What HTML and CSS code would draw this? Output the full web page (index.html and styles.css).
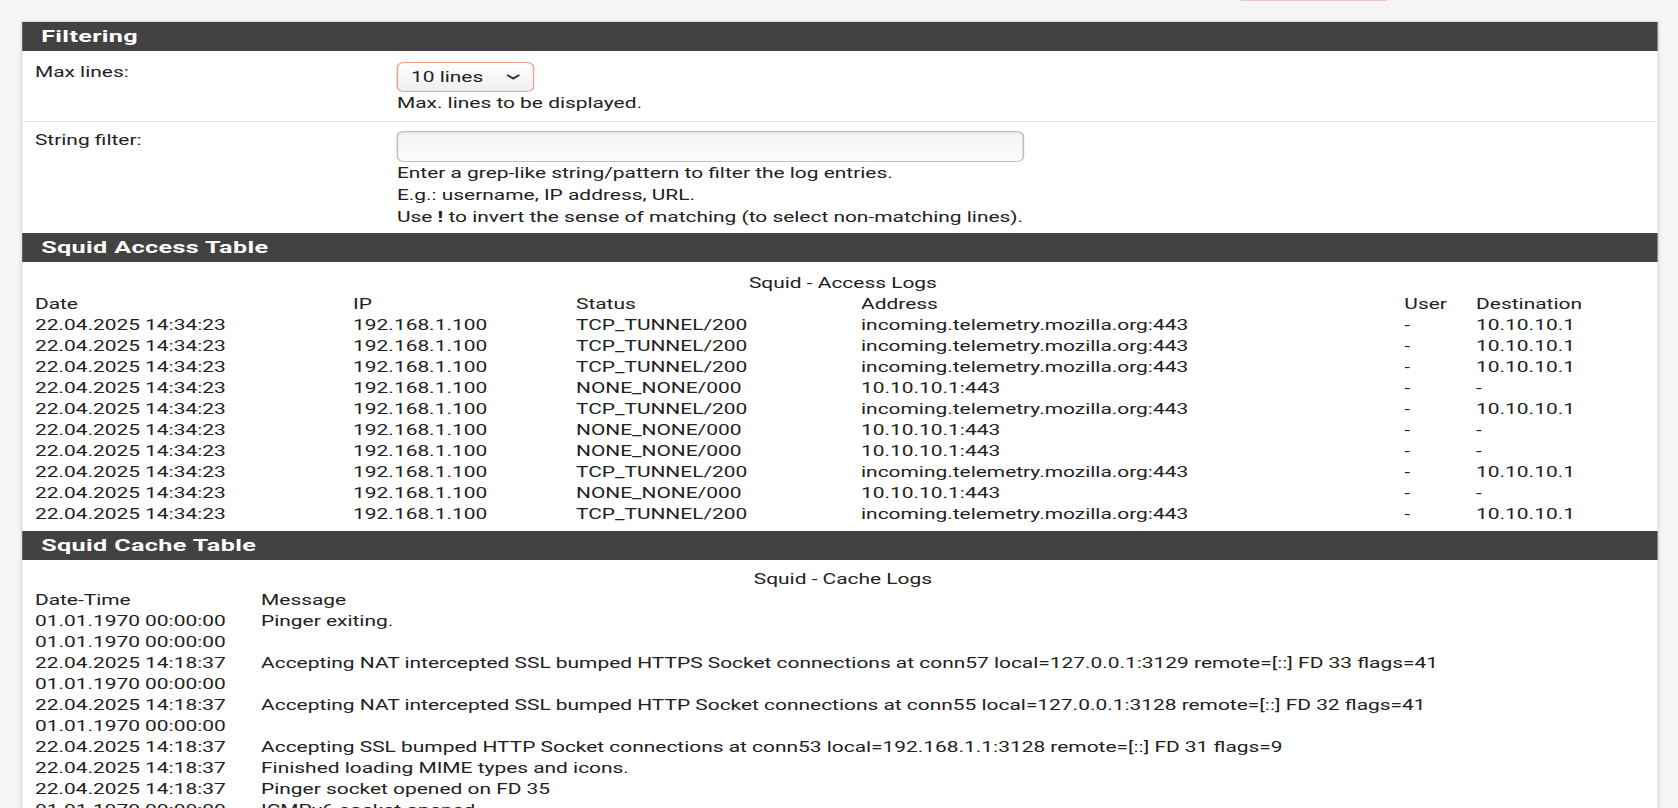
FILE: index.html
```html
<!DOCTYPE html>
<html lang="en">
<head>
<meta charset="utf-8">
<title>Squid Proxy Server: Real Time</title>
<link rel="stylesheet" href="styles.css">
</head>
<body>
<div class="stage">
  <div class="top-strip"><span class="btn-edge"></span></div>
  <div class="panel">
    <h2 class="panel-heading">Filtering</h2>
    <div class="form-row">
      <label class="form-label" for="maxlines">Max lines:</label>
      <div class="form-control-col">
        <div class="select-wrap">
          <select id="maxlines" class="select">
            <option>10 lines</option>
            <option>15 lines</option>
            <option>20 lines</option>
            <option>25 lines</option>
            <option>100 lines</option>
          </select>
          <svg class="chevron" viewBox="0 0 10 6" aria-hidden="true"><path d="M1.2 1.2 L5 4.8 L8.8 1.2"/></svg>
        </div>
        <div class="help">Max. lines to be displayed.</div>
      </div>
    </div>
    <div class="form-row">
      <label class="form-label" for="strfilter">String filter:</label>
      <div class="form-control-col">
        <input id="strfilter" class="text-input" type="text">
        <div class="help">Enter a grep-like string/pattern to filter the log entries.<br>E.g.: username, IP address, URL.<br>Use <b>!</b> to invert the sense of matching (to select non-matching lines).</div>
      </div>
    </div>

    <h2 class="panel-heading">Squid Access Table</h2>
    <div class="panel-body access-body">
      <table class="log-table">
        <caption>Squid - Access Logs</caption>
        <colgroup>
          <col class="c-date"><col class="c-ip"><col class="c-status"><col class="c-addr"><col class="c-user"><col>
        </colgroup>
        <thead>
          <tr><th>Date</th><th>IP</th><th>Status</th><th>Address</th><th>User</th><th>Destination</th></tr>
        </thead>
        <tbody>
          <tr><td>22.04.2025 14:34:23</td><td>192.168.1.100</td><td>TCP_TUNNEL/200</td><td>incoming.telemetry.mozilla.org:443</td><td>-</td><td>10.10.10.1</td></tr>
          <tr><td>22.04.2025 14:34:23</td><td>192.168.1.100</td><td>TCP_TUNNEL/200</td><td>incoming.telemetry.mozilla.org:443</td><td>-</td><td>10.10.10.1</td></tr>
          <tr><td>22.04.2025 14:34:23</td><td>192.168.1.100</td><td>TCP_TUNNEL/200</td><td>incoming.telemetry.mozilla.org:443</td><td>-</td><td>10.10.10.1</td></tr>
          <tr><td>22.04.2025 14:34:23</td><td>192.168.1.100</td><td>NONE_NONE/000</td><td>10.10.10.1:443</td><td>-</td><td>-</td></tr>
          <tr><td>22.04.2025 14:34:23</td><td>192.168.1.100</td><td>TCP_TUNNEL/200</td><td>incoming.telemetry.mozilla.org:443</td><td>-</td><td>10.10.10.1</td></tr>
          <tr><td>22.04.2025 14:34:23</td><td>192.168.1.100</td><td>NONE_NONE/000</td><td>10.10.10.1:443</td><td>-</td><td>-</td></tr>
          <tr><td>22.04.2025 14:34:23</td><td>192.168.1.100</td><td>NONE_NONE/000</td><td>10.10.10.1:443</td><td>-</td><td>-</td></tr>
          <tr><td>22.04.2025 14:34:23</td><td>192.168.1.100</td><td>TCP_TUNNEL/200</td><td>incoming.telemetry.mozilla.org:443</td><td>-</td><td>10.10.10.1</td></tr>
          <tr><td>22.04.2025 14:34:23</td><td>192.168.1.100</td><td>NONE_NONE/000</td><td>10.10.10.1:443</td><td>-</td><td>-</td></tr>
          <tr><td>22.04.2025 14:34:23</td><td>192.168.1.100</td><td>TCP_TUNNEL/200</td><td>incoming.telemetry.mozilla.org:443</td><td>-</td><td>10.10.10.1</td></tr>
        </tbody>
      </table>
    </div>

    <h2 class="panel-heading">Squid Cache Table</h2>
    <div class="panel-body cache-body">
      <table class="log-table">
        <caption>Squid - Cache Logs</caption>
        <colgroup>
          <col class="c-datetime"><col>
        </colgroup>
        <thead>
          <tr><th>Date-Time</th><th>Message</th></tr>
        </thead>
        <tbody>
          <tr><td>01.01.1970 00:00:00</td><td>Pinger exiting.</td></tr>
          <tr><td>01.01.1970 00:00:00</td><td></td></tr>
          <tr><td>22.04.2025 14:18:37</td><td>Accepting NAT intercepted SSL bumped HTTPS Socket connections at conn57 local=127.0.0.1:3129 remote=[::] FD 33 flags=41</td></tr>
          <tr><td>01.01.1970 00:00:00</td><td></td></tr>
          <tr><td>22.04.2025 14:18:37</td><td>Accepting NAT intercepted SSL bumped HTTP Socket connections at conn55 local=127.0.0.1:3128 remote=[::] FD 32 flags=41</td></tr>
          <tr><td>01.01.1970 00:00:00</td><td></td></tr>
          <tr><td>22.04.2025 14:18:37</td><td>Accepting SSL bumped HTTP Socket connections at conn53 local=192.168.1.1:3128 remote=[::] FD 31 flags=9</td></tr>
          <tr><td>22.04.2025 14:18:37</td><td>Finished loading MIME types and icons.</td></tr>
          <tr><td>22.04.2025 14:18:37</td><td>Pinger socket opened on FD 35</td></tr>
          <tr><td>01.01.1970 00:00:00</td><td>ICMPv6 socket opened.</td></tr>
          <tr><td>01.01.1970 00:00:00</td><td>ICMP socket opened.</td></tr>
        </tbody>
      </table>
    </div>
  </div>
</div>
</body>
</html>
```
FILE: styles.css
```css
html, body {
  margin: 0;
  padding: 0;
  height: 100%;
  overflow: hidden;
}

body {
  background: #f5f5f5;
  font-family: Roboto, "Liberation Sans", sans-serif;
  font-size: 14.14px;
  color: #212121;
}

/* the captured page is rendered wide: everything is stretched horizontally */
.stage {
  width: 1134px;
  transform: scaleX(1.48);
  transform-origin: 0 0;
}

.top-strip {
  height: 21px;
  display: flex;
  align-items: flex-start;
}

.btn-edge {
  display: block;
  margin-left: 838px;
  width: 98.5px;
  height: 1px;
  background: #efc4c4;
}

.panel {
  margin: 0 13.5px;
  background: #fff;
  border: 1px solid #dcdcdc;
  box-shadow: 0 1px 3px rgba(0, 0, 0, 0.12);
}

.panel-heading {
  margin: 0;
  height: 29px;
  padding-left: 13.3px;
  background: #424242;
  color: #fff;
  font-size: 17px;
  font-weight: 700;
  letter-spacing: 0.25px;
  line-height: 29px;
}

.form-row {
  display: flex;
  padding: 11px 0 7px;
  border-bottom: 1px solid #e3e3e3;
}

.form-row + .form-row {
  padding: 9px 0 5px;
  border-bottom: 0;
}

.form-label {
  box-sizing: border-box;
  width: 253.7px;
  padding-left: 9.1px;
  line-height: 20px;
  flex: none;
}

.form-row + .form-row .form-label {
  margin-top: -1px;
}

.form-control-col {
  display: flex;
  flex-direction: column;
  align-items: flex-start;
}

.select-wrap {
  position: relative;
  width: 92.6px;
  height: 30px;
}

.select {
  -webkit-appearance: none;
  appearance: none;
  box-sizing: border-box;
  width: 100%;
  height: 30px;
  margin: 0;
  padding: 0 20px 0 8.5px;
  border: 1px solid #e5a58d;
  border-radius: 5px;
  background: linear-gradient(#ffffff, #efefef);
  font-family: Roboto, "Liberation Sans", sans-serif;
  font-size: 14.14px;
  color: #212121;
  outline: none;
}

.chevron {
  position: absolute;
  right: 9px;
  top: 12px;
  width: 9.5px;
  height: 6px;
  fill: none;
  stroke: #333;
  stroke-width: 1.7;
  stroke-linecap: round;
  stroke-linejoin: round;
  pointer-events: none;
}

.text-input {
  box-sizing: border-box;
  width: 423.7px;
  height: 31px;
  margin: 0;
  padding: 0 8px;
  border: 1px solid #bdbdbd;
  border-radius: 5px;
  background: linear-gradient(#f4f4f4, #fcfcfc);
  box-shadow: inset 0 1px 1px rgba(0, 0, 0, 0.08);
  font-family: Roboto, "Liberation Sans", sans-serif;
  font-size: 14.14px;
}

.help {
  line-height: 22px;
}

.help b {
  font-weight: 700;
}

.panel-body {
  padding-left: 9.1px;
  padding-right: 4px;
}

.access-body {
  padding-top: 11px;
  padding-bottom: 6px;
}

.cache-body {
  padding-top: 9px;
  padding-bottom: 6px;
}

.log-table {
  width: 100%;
  border-collapse: collapse;
  table-layout: fixed;
  line-height: 21px;
}

.log-table caption {
  text-align: center;
  line-height: 21px;
  padding: 0;
}

.log-table th,
.log-table td {
  padding: 0;
  height: 21px;
  text-align: left;
  font-weight: 400;
  white-space: nowrap;
  overflow: hidden;
}

.c-date { width: 215px; }
.c-ip { width: 150.6px; }
.c-status { width: 192.6px; }
.c-addr { width: 367.1px; }
.c-user { width: 48.5px; }
.c-datetime { width: 152.8px; }
```
